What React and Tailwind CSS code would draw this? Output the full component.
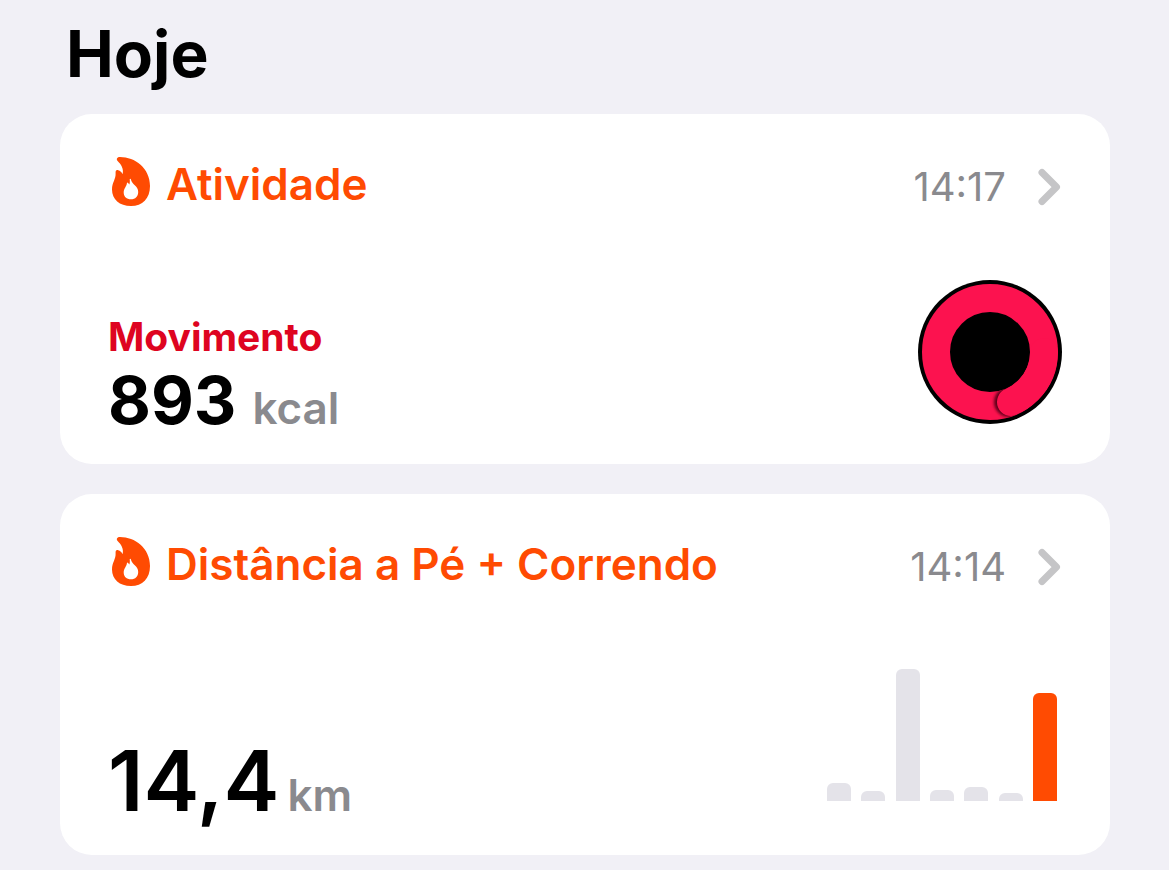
const week = [
    { day: "seg", height: 18 },
    { day: "ter", height: 10 },
    { day: "qua", height: 132 },
    { day: "qui", height: 11 },
    { day: "sex", height: 14 },
    { day: "sáb", height: 8 },
    { day: "dom", height: 108, today: true },
];

function Flame() {
    return (
        <svg viewBox="0 0 38 49" className="w-[38px] h-[49px] shrink-0" fill="#FF4B02" aria-hidden="true">
            <path
                fillRule="evenodd"
                d="M8 0C23 0 38 11 38 29C38 41.500 30.500 49 19 49C7.500 49 0 42.500 0 32.500C0 25.500 4 22 3.600 16C3.400 13.600 4.400 12.600 6.200 13.200C8.200 13.800 9.800 15.200 10.600 17.200C12 11.500 9 7.500 5.400 3.800C4 1.800 5.200 0 8 0ZM17.700 22.200C18 24.200 17.900 26 17.300 27.600C16.900 26.600 16 25.800 15 25.500C14.800 29.800 11.700 31 11.700 35.500C11.700 39.700 14.600 42.300 19 42.300C23.400 42.300 26.200 39.500 26.200 35C26.200 28.500 19.500 27.500 18.900 22.200C18.800 21.500 17.700 21.500 17.700 22.200Z"
            />
        </svg>
    );
}

function Chevron() {
    return (
        <svg viewBox="0 0 24 38" className="w-6 h-[38px] shrink-0" fill="none" aria-hidden="true">
            <path d="M4 4.500L18.500 19L4 33.500" stroke="#C5C5C7" strokeWidth="7" strokeLinecap="round" strokeLinejoin="round" />
        </svg>
    );
}

function CardHeader({ title, time }) {
    return (
        <a href="#" className="flex items-end justify-between">
            <h2 className="flex items-start gap-4 pl-1 text-[44px] leading-[54px] font-semibold text-[#FF4B02]">
                <Flame />
                {title}
            </h2>
            <span className="flex items-center gap-8 text-[40px] leading-[48px] text-[#8A8A8E]">
                {time}
                <Chevron />
            </span>
        </a>
    );
}

function MoveRing() {
    return (
        <svg viewBox="0 0 144 144" className="w-36 h-36 shrink-0" role="img" aria-label="Movimento">
            <defs>
                <clipPath id="track">
                    <path clipRule="evenodd" d="M72 4a68 68 0 1 1 0 136a68 68 0 1 1 0-136ZM72 32a40 40 0 1 0 0 80a40 40 0 1 0 0-80Z" />
                </clipPath>
                <filter id="shade" x="-50%" y="-50%" width="200%" height="200%">
                    <feGaussianBlur stdDeviation="1.5" />
                </filter>
            </defs>
            <circle cx="72" cy="72" r="72" fill="#000" />
            <circle cx="72" cy="72" r="54" fill="none" stroke="#FC124F" strokeWidth="28" />
            {/* end of the second lap, with its shadow on the first */}
            <g clipPath="url(#track)">
                <circle cx="91" cy="122" r="15" fill="#5C0018" filter="url(#shade)" />
                <path d="M126 72A54 54 0 0 1 93 122" fill="none" stroke="#FC124F" strokeWidth="28" strokeLinecap="round" />
            </g>
        </svg>
    );
}

function WeekChart() {
    return (
        <div className="flex items-end justify-between w-[230px] h-[132px] mr-[5px]" role="img" aria-label="Semana">
            {week.map((bar) => (
                <div
                    key={bar.day}
                    className={`w-6 rounded-t-md ${bar.today ? "bg-[#FF4B02]" : "bg-[#E4E3E9]"}`}
                    style={{ height: bar.height }}
                />
            ))}
        </div>
    );
}

export default function App() {
    return (
        <main className="min-h-screen bg-[#F1F0F6] pl-[60px] pr-[59px] pt-[14px] pb-4 font-['Inter',sans-serif]">
            <h1 className="pl-[6px] text-[64px] leading-[80px] font-bold text-black">Hoje</h1>

            <section className="mt-5 rounded-[32px] bg-white px-12 pt-[43px] pb-[18px]">
                <CardHeader title="Atividade" time="14:17" />
                <div className="mt-[69px] flex items-start justify-between">
                    <div className="pt-8">
                        <p className="text-[39px] leading-[50px] font-bold text-[#DE0420]">Movimento</p>
                        <p className="flex items-baseline gap-4 leading-[76px]">
                            <span className="text-[66px] font-bold text-black">893</span>
                            <span className="text-[44px] font-semibold text-[#8A8A8E]">kcal</span>
                        </p>
                    </div>
                    <MoveRing />
                </div>
            </section>

            <section className="mt-[30px] rounded-[32px] bg-white px-12 pt-[43px] pb-[10px]">
                <CardHeader title="Distância a Pé + Correndo" time="14:14" />
                <div className="mt-[78px] flex items-start justify-between">
                    <p className="flex items-baseline gap-2 pt-[62px] leading-[100px]">
                        <span className="text-[84px] font-semibold text-black">14,4</span>
                        <span className="text-[44px] font-semibold text-[#8A8A8E]">km</span>
                    </p>
                    <WeekChart />
                </div>
            </section>
        </main>
    );
}
